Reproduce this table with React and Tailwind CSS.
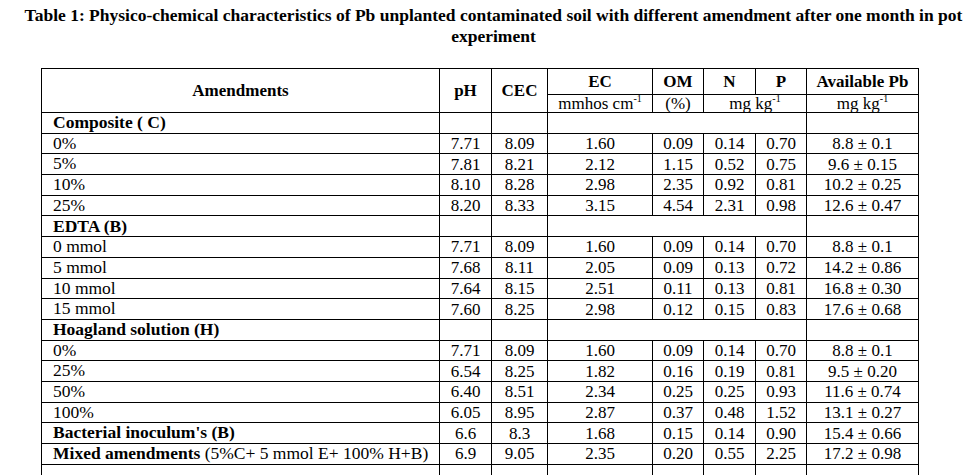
const rows = [
  { label: 'Composite ( C)', group: true },
  { label: '0%', v: ['7.71', '8.09', '1.60', '0.09', '0.14', '0.70', '8.8 ± 0.1'] },
  { label: '5%', v: ['7.81', '8.21', '2.12', '1.15', '0.52', '0.75', '9.6 ± 0.15'] },
  { label: '10%', v: ['8.10', '8.28', '2.98', '2.35', '0.92', '0.81', '10.2 ± 0.25'] },
  { label: '25%', v: ['8.20', '8.33', '3.15', '4.54', '2.31', '0.98', '12.6 ± 0.47'] },
  { label: 'EDTA (B)', group: true },
  { label: '0 mmol', v: ['7.71', '8.09', '1.60', '0.09', '0.14', '0.70', '8.8 ± 0.1'] },
  { label: '5 mmol', v: ['7.68', '8.11', '2.05', '0.09', '0.13', '0.72', '14.2 ± 0.86'] },
  { label: '10 mmol', v: ['7.64', '8.15', '2.51', '0.11', '0.13', '0.81', '16.8 ± 0.30'] },
  { label: '15 mmol', v: ['7.60', '8.25', '2.98', '0.12', '0.15', '0.83', '17.6 ± 0.68'] },
  { label: 'Hoagland solution (H)', group: true },
  { label: '0%', v: ['7.71', '8.09', '1.60', '0.09', '0.14', '0.70', '8.8 ± 0.1'] },
  { label: '25%', v: ['6.54', '8.25', '1.82', '0.16', '0.19', '0.81', '9.5 ± 0.20'] },
  { label: '50%', v: ['6.40', '8.51', '2.34', '0.25', '0.25', '0.93', '11.6 ± 0.74'] },
  { label: '100%', v: ['6.05', '8.95', '2.87', '0.37', '0.48', '1.52', '13.1 ± 0.27'] },
  { label: "Bacterial inoculum's (B)", bold: true, v: ['6.6', '8.3', '1.68', '0.15', '0.14', '0.90', '15.4 ± 0.66'] },
  { label: 'Mixed amendments', extra: ' (5%C+ 5 mmol E+ 100% H+B)', bold: true, v: ['6.9', '9.05', '2.35', '0.20', '0.55', '2.25', '17.2 ± 0.98'] },
];

const cell = 'border border-black p-0 text-center align-middle';

function Sup({ children }) {
  return <sup className="text-[10px] -top-[7px]">{children}</sup>;
}

export default function App() {
  return (
    <div className="min-h-screen bg-white text-black font-['Liberation_Serif','Times_New_Roman',serif]">
      <h1 className="pt-[5px] pl-[7px] text-center text-[17.5px] font-bold leading-[21px]">
        Table 1: Physico-chemical characteristics of Pb unplanted contaminated soil with different amendment after one month in pot experiment
      </h1>

      <table className="mt-[21px] ml-[41px] w-[877px] table-fixed border-collapse border-[1.5px] border-black text-[17px] leading-none">
        <colgroup>
          <col className="w-[398px]" />
          <col className="w-[52px]" />
          <col className="w-[56px]" />
          <col className="w-[105px]" />
          <col className="w-[51px]" />
          <col className="w-[52px]" />
          <col className="w-[51px]" />
          <col className="w-[112px]" />
        </colgroup>
        <thead className="font-bold">
          <tr className="h-[26px]">
            <th rowSpan={2} className={cell}>Amendments</th>
            <th rowSpan={2} className={cell}>pH</th>
            <th rowSpan={2} className={cell}>CEC</th>
            <th className={cell}>EC</th>
            <th className={cell}>OM</th>
            <th className={cell}>N</th>
            <th className={cell}>P</th>
            <th className={cell}>Available Pb</th>
          </tr>
          <tr className="h-[17px] font-normal">
            <td className={cell}>mmhos cm<Sup>-1</Sup></td>
            <td className={cell}>(%)</td>
            <td colSpan={2} className={cell}>mg kg<Sup>-1</Sup></td>
            <td className={cell}>mg kg<Sup>-1</Sup></td>
          </tr>
        </thead>
        <tbody>
          {rows.map((r, i) => (
            <tr key={i} className="h-[20.7px]">
              <td className={`border border-black p-0 pl-[11px] text-left text-[17.5px] ${r.group || r.bold ? 'font-bold' : ''}`}>
                {r.label}
                {r.extra && <span className="font-normal">{r.extra}</span>}
              </td>
              {r.group ? (
                <>
                  <td className={cell}></td>
                  <td className={cell}></td>
                  <td colSpan={4} className={cell}></td>
                  <td className={cell}></td>
                </>
              ) : (
                r.v.map((x, j) => (
                  <td key={j} className={cell}>{x}</td>
                ))
              )}
            </tr>
          ))}
          <tr className="h-[20.7px]">
            <td className={cell}></td>
            <td className={cell}></td>
            <td className={cell}></td>
            <td className={cell}></td>
            <td className={cell}></td>
            <td className={cell}></td>
            <td className={cell}></td>
            <td className={cell}></td>
          </tr>
        </tbody>
      </table>
    </div>
  );
}
